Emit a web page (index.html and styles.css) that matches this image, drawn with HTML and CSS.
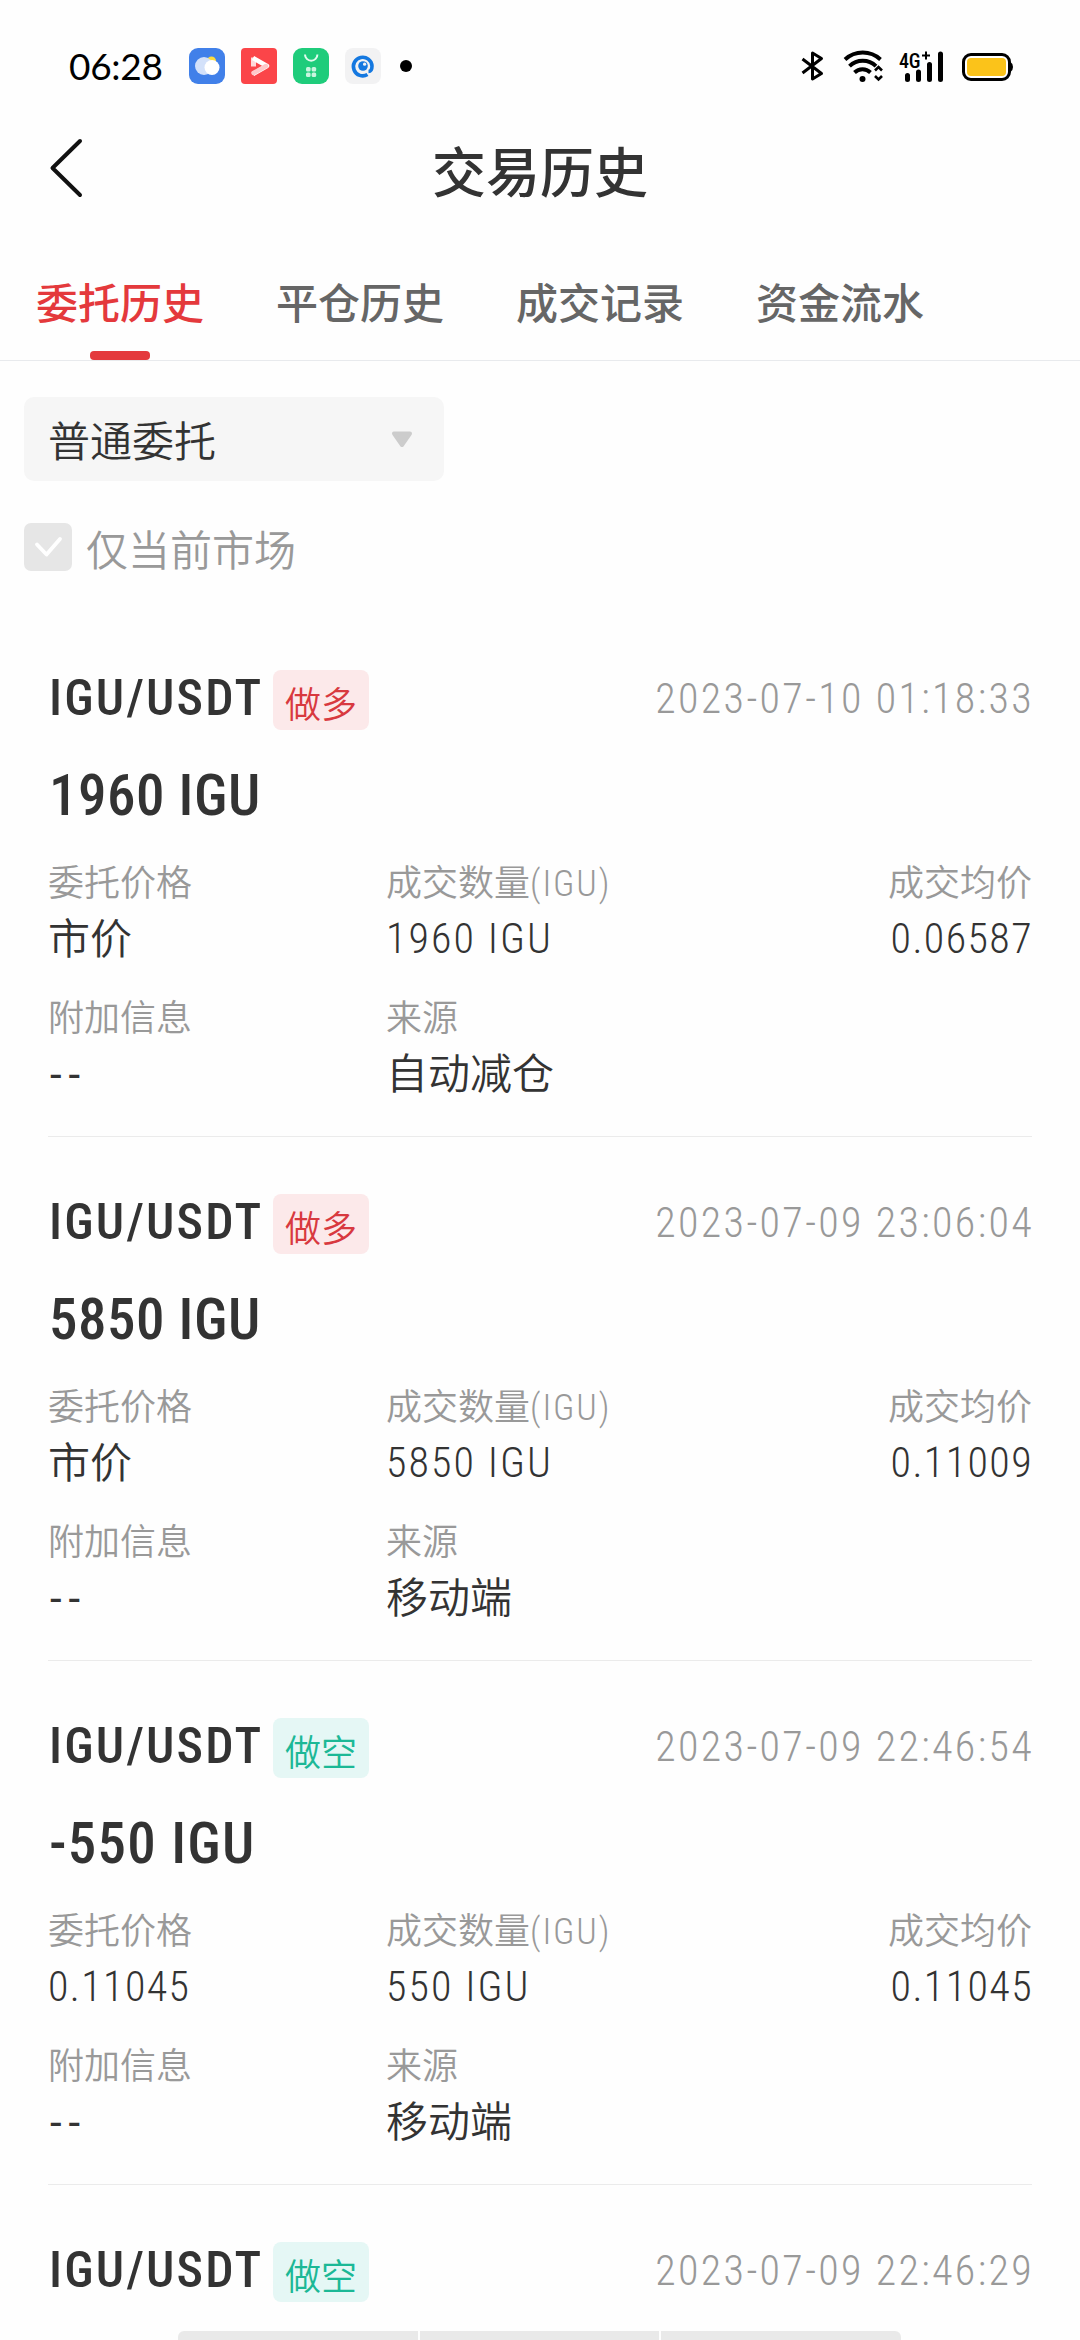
FILE: index.html
```
<!DOCTYPE html>
<html lang="zh-CN">
<head>
<meta charset="utf-8">
<title>交易历史</title>
<link rel="stylesheet" href="styles.css">
</head>
<body>
<div class="screen">
  <div class="status">
    <span class="clock">06:28</span>
    <div class="apps">
      <svg width="36" height="36" viewBox="0 0 36 36"><rect width="36" height="36" rx="9" fill="#4180e9"/><circle cx="22.500" cy="13" r="4.500" fill="#ffdc3c"/><circle cx="15" cy="18" r="9" fill="#d3e1fa"/><circle cx="23" cy="19.500" r="7.500" fill="#fff"/></svg>
      <svg width="36" height="36" viewBox="0 0 36 36"><rect width="36" height="36" rx="4" fill="#fb4549"/><path d="M12.500 9.500v9" stroke="#ffd9d9" stroke-width="5"/><path d="M12 10l14 8-14 8" fill="none" stroke="#fff" stroke-width="4.500" stroke-linejoin="round"/><path d="M25 18l-12.500 7" stroke="#ffc9ca" stroke-width="4.500" stroke-linecap="round"/></svg>
      <svg width="36" height="36" viewBox="0 0 36 36"><rect width="36" height="36" rx="9" fill="#1fcc7b"/><path d="M12 6.500a6.200 6.200 0 0 0 12.400 0" fill="none" stroke="#e3fbef" stroke-width="2"/><g fill="#c9f5df"><rect x="13" y="19" width="4.600" height="4.600" rx="1.500"/><rect x="18.600" y="19" width="4.600" height="4.600" rx="1.500"/><rect x="13" y="24.400" width="4.600" height="4.600" rx="1.500"/><rect x="18.600" y="24.400" width="4.600" height="4.600" rx="1.500"/></g></svg>
      <svg width="36" height="36" viewBox="0 0 36 36"><rect width="36" height="36" rx="8" fill="#f2f2f3"/><path d="M22.500 26.500A9.300 9.300 0 1 1 27 18c0 3-.5 5.500-3.500 5.500" fill="none" stroke="#1478e0" stroke-width="3.600"/><circle cx="18" cy="18" r="4.800" fill="#1478e0"/><circle cx="19.600" cy="16.200" r="1.600" fill="#f2f2f3"/></svg>
      <i class="more"></i>
    </div>
    <svg class="signals" width="212" height="32" viewBox="0 0 212 32">
      <path d="M1.500 9l19 14.500L11.500 29V3l9 5.500L1.500 23" fill="none" stroke="#000" stroke-width="3" stroke-linejoin="round"/>
      <g fill="none" stroke="#000" stroke-width="3.900"><path d="M44 9.500a26 26 0 0 1 35.500 0"/><path d="M48.500 16.200a19 19 0 0 1 26.500 0"/><path d="M53.500 22.500a11.500 11.500 0 0 1 16 0"/><path d="M74 20.500l3.500-3.500 3.500 3.500M74 26l3.500 3.500 3.500-3.500" stroke-width="2.600"/></g>
      <circle cx="61.500" cy="29" r="3"/>
      <text class="network" x="98" y="18">4G</text>
      <path d="M125 1.500v8M121 5.500h8" stroke="#000" stroke-width="2"/>
      <g stroke="#000" stroke-width="5" stroke-linecap="round"><path d="M106.500 25.500v4M117.500 22v7.500M128.500 14.500v15M139.500 4v25.500"/></g>
      <rect x="162.500" y="4.500" width="46" height="25" rx="7.500" fill="#fff" stroke="#000" stroke-width="3"/>
      <path d="M209.500 12q2.500 1.500 2.500 5t-2.500 5z"/>
      <rect x="166" y="8" width="39" height="18" rx="4" fill="#fbc31a"/>
    </svg>
  </div>

  <header class="header">
    <svg class="back" width="40" height="64" viewBox="0 0 40 64"><path d="M36 5L8.500 32 36 59" fill="none" stroke="#111" stroke-width="4" stroke-linecap="round" stroke-linejoin="round"/></svg>
    <h1 class="title">交易历史</h1>
  </header>

  <nav class="tabs">
    <a class="tab active">委托历史</a>
    <a class="tab">平仓历史</a>
    <a class="tab">成交记录</a>
    <a class="tab">资金流水</a>
  </nav>

  <div class="filters">
    <div class="select"><span>普通委托</span><svg width="22" height="17" viewBox="0 0 22 17"><path d="M3 2.500h16L11 14z" fill="#ccc" stroke="#ccc" stroke-width="4" stroke-linejoin="round"/></svg></div>
    <label class="only"><svg width="48" height="48" viewBox="0 0 48 48"><rect width="48" height="48" rx="7" fill="#e6e6e6"/><path d="M13 21.500l9.500 10L36 16" fill="none" stroke="#fff" stroke-width="3.800" stroke-linecap="round" stroke-linejoin="round"/></svg><span>仅当前市场</span></label>
  </div>

  <main class="orders">
    <article class="order">
      <div class="head"><span class="symbol">IGU/USDT</span><span class="side long">做多</span><time class="time">2023-07-10 01:18:33</time></div>
      <div class="amount">1960 IGU</div>
      <dl class="facts">
        <div><dt>委托价格</dt><dd>市价</dd></div>
        <div><dt>成交数量<span class="unit">(IGU)</span></dt><dd class="num qty">1960 IGU</dd></div>
        <div class="right"><dt>成交均价</dt><dd class="num">0.06587</dd></div>
        <div><dt>附加信息</dt><dd class="none">--</dd></div>
        <div><dt>来源</dt><dd>自动减仓</dd></div>
      </dl>
    </article>
    <article class="order">
      <div class="head"><span class="symbol">IGU/USDT</span><span class="side long">做多</span><time class="time">2023-07-09 23:06:04</time></div>
      <div class="amount">5850 IGU</div>
      <dl class="facts">
        <div><dt>委托价格</dt><dd>市价</dd></div>
        <div><dt>成交数量<span class="unit">(IGU)</span></dt><dd class="num qty">5850 IGU</dd></div>
        <div class="right"><dt>成交均价</dt><dd class="num">0.11009</dd></div>
        <div><dt>附加信息</dt><dd class="none">--</dd></div>
        <div><dt>来源</dt><dd>移动端</dd></div>
      </dl>
    </article>
    <article class="order">
      <div class="head"><span class="symbol">IGU/USDT</span><span class="side short">做空</span><time class="time">2023-07-09 22:46:54</time></div>
      <div class="amount negative">-550 IGU</div>
      <dl class="facts">
        <div><dt>委托价格</dt><dd class="num">0.11045</dd></div>
        <div><dt>成交数量<span class="unit">(IGU)</span></dt><dd class="num qty">550 IGU</dd></div>
        <div class="right"><dt>成交均价</dt><dd class="num">0.11045</dd></div>
        <div><dt>附加信息</dt><dd class="none">--</dd></div>
        <div><dt>来源</dt><dd>移动端</dd></div>
      </dl>
    </article>
    <article class="order">
      <div class="head"><span class="symbol">IGU/USDT</span><span class="side short">做空</span><time class="time">2023-07-09 22:46:29</time></div>
    </article>
  </main>
  <div class="gesture"><i></i><i></i><i></i></div>
</div>
</body>
</html>
```
FILE: styles.css
```
* { box-sizing: border-box; }
body {
  margin: 0;
  background: #fefefe;
  color: #333;
  font-family: Roboto, "Noto Sans CJK SC", sans-serif;
  font-weight: 350;
}
svg { display: block; flex: none; }
.screen { position: relative; width: 1080px; height: 2340px; overflow: hidden; }

.status { display: flex; align-items: center; height: 132px; padding: 0 67px 0 69px; }
.clock { width: 120px; color: #000; font: 400 37px/48px Lato, sans-serif; letter-spacing: -0.3px; }
.apps { display: flex; align-items: center; gap: 16px; }
.more { width: 12px; height: 12px; margin-left: 3px; border-radius: 50%; background: #000; }
.signals { margin-left: auto; overflow: visible; }
.network { font: 500 20px Roboto, sans-serif; font-stretch: 85%; letter-spacing: -0.3px; }

.header { display: flex; height: 140px; padding: 4px 44px 0; }
.back { width: 40px; }
.title { flex: 1; margin: 0 40px 0 0; padding-top: 1px; font-size: 54px; font-weight: 500; line-height: 76px; text-align: center; }

.tabs { display: flex; gap: 72px; height: 89px; padding: 0 36px; border-bottom: 1px solid #e8eaed; }
.tab { display: flex; flex-direction: column; justify-content: space-between; align-items: center; height: 88px; color: #666; font-size: 42px; font-weight: 500; line-height: 66px; }
.active { color: #e4393c; }
.active::after { content: ""; width: 60px; height: 9px; border-radius: 4px; background: #e4393c; }

.filters { height: 252px; padding: 36px 24px 0; font-size: 42px; }
.select { display: flex; justify-content: space-between; align-items: center; width: 420px; height: 84px; padding: 0 31px 0 24px; border-radius: 10px; background: #f6f6f6; line-height: 60px; }
.select span { padding-top: 7px; }
.only { display: flex; align-items: center; gap: 14px; height: 48px; margin-top: 42px; color: #999; line-height: 56px; }
.only span { padding-top: 9px; }

.orders { padding: 0 48px; }
.order { height: 524px; padding-top: 57px; border-bottom: 1px solid #ebebeb; }
.head { display: flex; height: 60px; }
.symbol { width: 225px; padding-left: 1px; font-size: 50px; font-weight: 500; font-stretch: 85%; line-height: 56px; letter-spacing: 2.2px; white-space: nowrap; }
.side { width: 96px; height: 60px; padding-top: 6px; border-radius: 8px; font-size: 36px; line-height: 60px; text-align: center; }
.long { background: #fce9ea; color: #d8393f; }
.short { background: #e5f7f5; color: #1cb896; }
.time { margin: 0 -2px 0 auto; color: #999; font-size: 42px; font-weight: 350; font-stretch: 85%; line-height: 58px; letter-spacing: 2.35px; }
.amount { margin-top: 34px; padding-left: 1px; font-size: 57px; font-weight: 500; font-stretch: 85%; line-height: 64px; letter-spacing: 0.5px; }
.negative { letter-spacing: 1.2px; }
.facts { display: grid; grid-template-columns: 338px 336px 1fr; row-gap: 25px; margin: 31px 0 0; }
.facts dt { height: 50px; color: #999; font-size: 36px; line-height: 50px; }
.facts dd { height: 60px; margin: 0; font-size: 42px; line-height: 61px; }
.facts .num { font-stretch: 85%; letter-spacing: 1.4px; line-height: 59px; }
.facts .qty { letter-spacing: 2.1px; }
.facts .none { padding-left: 2px; font-weight: 400; letter-spacing: 7px; }
.facts .right { margin-right: -1px; text-align: right; }
.facts .right dt { padding-right: 1px; }
.unit { font-stretch: 85%; letter-spacing: 1.9px; }

.gesture { position: absolute; left: 178px; bottom: 0; display: flex; gap: 2px; width: 723px; height: 9px; border-radius: 6px 6px 0 0; overflow: hidden; }
.gesture i { flex: 1; background: #e9e9e9; }
```
